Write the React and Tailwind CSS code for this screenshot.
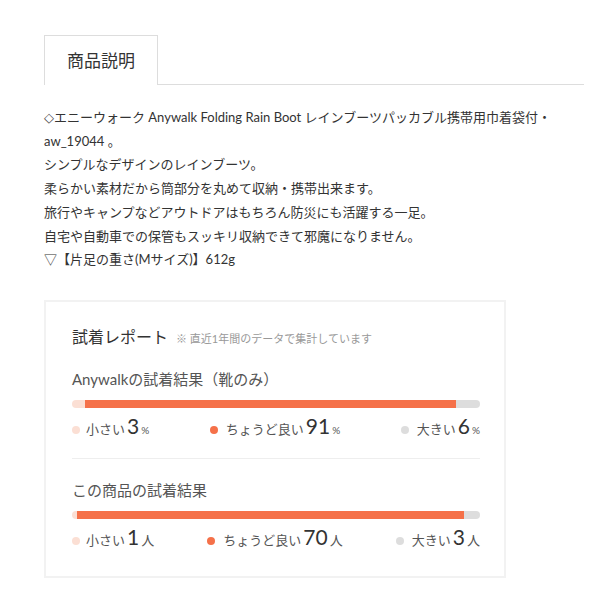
const FONT = { fontFamily: "Lato, 'Noto Sans CJK JP', sans-serif" }

const DESC = [
  'エニーウォーク Anywalk Folding Rain Boot レインブーツパッカブル携帯用巾着袋付・',
  'aw_19044 。',
  'シンプルなデザインのレインブーツ。',
  '柔らかい素材だから筒部分を丸めて収納・携帯出来ます。',
  '旅行やキャンプなどアウトドアはもちろん防災にも活躍する一足。',
  '自宅や自動車での保管もスッキリ収納できて邪魔になりません。',
  '▽【片足の重さ(Mサイズ)】612g',
]

function Result({ title, small, good, big, unit, widths }) {
  const unitCls = unit === '%' ? 'text-[10px]' : 'text-[13px]'
  return (
    <div>
      <p className="text-[15px] text-[#555] leading-[22px]">{title}</p>
      <div className="mt-[10px] flex h-[8px] w-full overflow-hidden rounded-full">
        <div className="bg-[#fbdfd4]" style={{ width: widths[0] }} />
        <div className="bg-[#f57149]" style={{ width: widths[1] }} />
        <div className="flex-1 bg-[#dddddd]" />
      </div>
      <div className="mt-[6px] flex items-center justify-between text-[13px] text-[#555]">
        <span className="flex items-baseline">
          <span className="mr-[6px] inline-block h-[8px] w-[8px] rounded-full bg-[#fbdfd4]" />
          小さい<span className="ml-[2px] mr-[2px] text-[21px] leading-[24px] text-[#333]">{small}</span>
          <span className={unitCls}>{unit}</span>
        </span>
        <span className="flex items-baseline">
          <span className="mr-[8px] inline-block h-[8px] w-[8px] rounded-full bg-[#f57149]" />
          ちょうど良い<span className="ml-[2px] mr-[2px] text-[21px] leading-[24px] text-[#333]">{good}</span>
          <span className={unitCls}>{unit}</span>
        </span>
        <span className="flex items-baseline">
          <span className="mr-[8px] inline-block h-[8px] w-[8px] rounded-full bg-[#dddddd]" />
          大きい<span className="ml-[2px] mr-[2px] text-[21px] leading-[24px] text-[#333]">{big}</span>
          <span className={unitCls}>{unit}</span>
        </span>
      </div>
    </div>
  )
}

export default function App() {
  return (
    <div className="min-h-[600px] bg-white pt-[35px] pl-[44px]" style={FONT}>
      <div className="w-[540px]">
        {/* tabs */}
        <div className="flex border-b border-[#dddddd]">
          <div className="-mb-px flex h-[50px] w-[114px] items-center justify-center border border-b-0 border-[#dddddd] bg-white text-[17px] text-[#333]">
            商品説明
          </div>
        </div>

        {/* description */}
        <div className="mt-[21px] text-[13px] leading-[23.7px] text-[#333]">
          {DESC.map((line, i) => (
            <p key={i}>
              {i === 0 && <span style={{ fontFamily: "'DejaVu Sans', sans-serif" }} className="text-[#444]">◇</span>}
              {line}
            </p>
          ))}
        </div>

        {/* fitting report */}
        <div className="mt-[28px] w-[462px] border-2 border-[#f2f2f2] pt-[22px] pr-[24px] pb-[25px] pl-[26px]">
          <div className="flex items-baseline">
            <span className="text-[16px] leading-[26px] text-[#333]">試着レポート</span>
            <span className="ml-[8px] text-[11px] text-[#999]">※ 直近1年間のデータで集計しています</span>
          </div>
          <div className="mt-[18px]">
            <Result title="Anywalkの試着結果（靴のみ）" small="3" good="91" big="6" unit="%" widths={['13px', '371px']} />
          </div>
          <div className="mt-[19px] mb-[20px] h-px bg-[#eeeeee]" />
          <Result title="この商品の試着結果" small="1" good="70" big="3" unit="人" widths={['5px', '387px']} />
        </div>
      </div>
    </div>
  )
}
